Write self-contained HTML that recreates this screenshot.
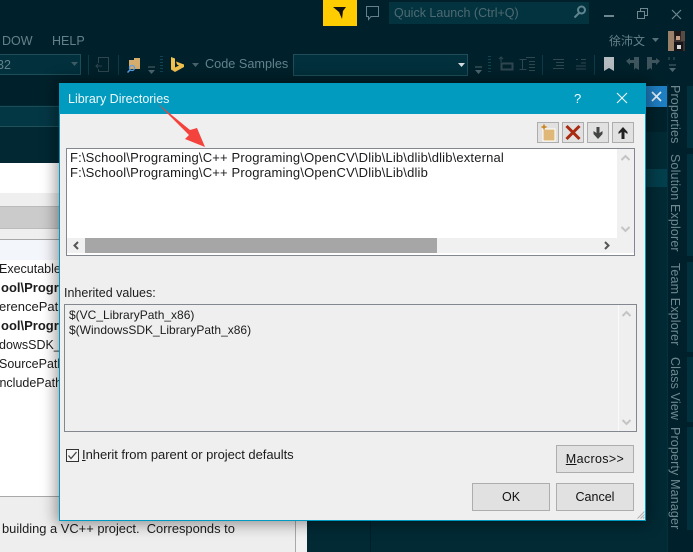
<!DOCTYPE html>
<html><head><meta charset="utf-8">
<style>
html,body{margin:0;padding:0;}
body{width:693px;height:552px;overflow:hidden;position:relative;background:#00212b;font-family:"Liberation Sans","Noto Sans CJK TC",sans-serif;font-size:12px;}
.a{position:absolute;}
.t{position:absolute;white-space:nowrap;line-height:16px;}
.d{color:#1c1c1c;}
.m{color:#64808a;}
.btn{position:absolute;background:#e1e1e1;border:1px solid #adadad;box-sizing:border-box;text-align:center;color:#111;font-size:12.5px;line-height:27px;}
.tb{position:absolute;width:22px;height:21px;top:122px;background:#e1e1e1;border:1px solid #adadad;box-sizing:border-box;}
.v{position:absolute;white-space:nowrap;color:#6f8890;font-size:12.5px;letter-spacing:.15px;line-height:16px;transform-origin:0 0;transform:rotate(90deg);}
</style></head><body>

<!-- top chrome -->
<div class="a" style="left:323px;top:0;width:34px;height:26px;background:#ffcc00"></div>
<svg class="a" style="left:323px;top:0" width="34" height="26"><path d="M10 7H23L20 11L19 19L16 12Z" fill="#111"/></svg>
<svg class="a" style="left:364px;top:5px" width="17" height="17" fill="none" stroke="#64808a" stroke-width="1"><path d="M2.500 1.500H14.500V11.500H7L4.500 14.500V11.500H2.500Z"/></svg>
<div class="a" style="left:389px;top:2px;width:200px;height:22px;background:#03333f"></div>
<div class="t" style="left:394px;top:5px;color:#4d6a73;font-size:12.500px">Quick Launch (Ctrl+Q)</div>
<svg class="a" style="left:571px;top:4px" width="18" height="16" fill="none" stroke="#5f8490" stroke-width="2"><circle cx="10.500" cy="6" r="3.500"/><path d="M8 9L3.500 13.500"/></svg>
<div class="a" style="left:604px;top:15px;width:10px;height:2px;background:#6f8890"></div>
<svg class="a" style="left:636px;top:7px" width="14" height="14" fill="none" stroke="#6f8890" stroke-width="1"><rect x="1.500" y="4.500" width="7" height="7"/><path d="M4.500 4V1.500H11.500V8.500H9"/></svg>
<svg class="a" style="left:671px;top:9px" width="12" height="11" stroke="#6f8890" stroke-width="1.200"><path d="M1 1L10 10M10 1L1 10"/></svg>

<div class="t m" style="left:2px;top:33px;font-size:12.500px">DOW</div>
<div class="t m" style="left:52px;top:33px;font-size:12.500px">HELP</div>
<div class="t m" style="left:609px;top:33px;font-size:12px">徐沛文</div>
<svg class="a" style="left:652px;top:38px" width="8" height="5"><path d="M0 0H7L3.500 4Z" fill="#58707a"/></svg>
<svg class="a" style="left:668px;top:31px" width="17" height="20"><rect width="17" height="20" fill="#3a3030"/><path d="M0 0H6V20H0Z" fill="#9a8068"/><path d="M6 0H13L12 8H7Z" fill="#1c1618"/><path d="M8 5H12V9H8Z" fill="#c79f86"/><path d="M6 11H15V20H6Z" fill="#15151a"/><path d="M9 14H13V18H9Z" fill="#d8d8d8"/><path d="M13 0H17V10H13Z" fill="#5a4a44"/></svg>

<!-- toolbar -->
<div class="a" style="left:-2px;top:54px;width:83px;height:21px;border:1px solid #1d4e5a;background:#02303c;box-sizing:border-box"></div>
<div class="t m" style="left:-3px;top:57px;font-size:12.500px">32</div>
<svg class="a" style="left:71px;top:62px" width="8" height="5"><path d="M0 0H7L3.500 4Z" fill="#3f5c66"/></svg>
<div class="a" style="left:88px;top:55px;width:1px;height:20px;background:#0d3c48"></div>
<svg class="a" style="left:95px;top:56px" width="15" height="18" fill="none" stroke="#2f464e"><path d="M3.500 7V1.500H13.500V15.500H3.500V13"/><path d="M1 10H7M3 8L1 10L3 12"/></svg>
<div class="a" style="left:118px;top:55px;width:1px;height:20px;background:#0d3c48"></div>
<svg class="a" style="left:126px;top:57px" width="16" height="16"><path d="M3 3H8V1H14V12H3Z" fill="#d6ad6d"/><circle cx="6" cy="11" r="2.500" fill="none" stroke="#5c9fe8" stroke-width="1.300"/><path d="M4 13L1.500 15.500" stroke="#5c9fe8" stroke-width="1.500"/></svg>
<svg class="a" style="left:147px;top:66px" width="9" height="9"><path d="M1 1H8" stroke="#4f666e"/><path d="M1 4H8L4.500 8Z" fill="#4f666e"/></svg>
<div class="a" style="left:160px;top:56px;width:3px;height:17px;background:repeating-linear-gradient(#0f4450 0 1px,transparent 1px 3px)"></div>
<svg class="a" style="left:170px;top:56px" width="15" height="17"><path d="M1 1L5 2.500V11.500L9 9.500L7 8.500L6 5.500L14 8.500V11L5 16L1 13.500Z" fill="#f2c14e"/></svg>
<svg class="a" style="left:192px;top:63px" width="8" height="5"><path d="M0 0H7L3.500 4Z" fill="#4a626b"/></svg>
<div class="t" style="left:205px;top:56px;color:#62828d;font-size:12.700px">Code Samples</div>
<div class="a" style="left:293px;top:54px;width:175px;height:22px;border:1px solid #1d4e5a;background:#02303c;box-sizing:border-box"></div>
<svg class="a" style="left:458px;top:63px" width="8" height="5"><path d="M0 0H7L3.500 4Z" fill="#d5dde0"/></svg>
<svg class="a" style="left:474px;top:66px" width="9" height="9"><path d="M1 1H8" stroke="#4f666e"/><path d="M1 4H8L4.500 8Z" fill="#4f666e"/></svg>
<div class="a" style="left:488px;top:56px;width:3px;height:17px;background:repeating-linear-gradient(#0f4450 0 1px,transparent 1px 3px)"></div>
<svg class="a" style="left:498px;top:56px" width="72" height="17" fill="none" stroke="#30474f"><path d="M3 1V6M1 3L3 1L5 3" /><rect x="3.500" y="7.500" width="11" height="6" stroke-width="2"/><path d="M21.500 3.500H28.500M24.500 3.500V13.500M21.500 13.500H28.500M28 1.500H37M31 5.500H37M31 8.500H37M31 11.500H37M31 14.500H37"/></svg>
<div class="a" style="left:542px;top:55px;width:1px;height:20px;background:#0d3c48"></div>
<svg class="a" style="left:551px;top:58px" width="36" height="13" fill="none" stroke="#30474f"><path d="M2 1.500H13M5 4.500H13M5 7.500H13M2 10.500H13M25 1.500H27M30 1.500H35M30 5H35M25 8H35M25 11H35"/></svg>
<div class="a" style="left:594px;top:55px;width:1px;height:20px;background:#0d3c48"></div>
<svg class="a" style="left:604px;top:57px" width="10" height="15"><path d="M0 0H10V14L5 11L0 14Z" fill="#b4bcbf"/></svg>
<svg class="a" style="left:625px;top:57px" width="15" height="14"><path d="M1 4L5 1V3H9V0H14V13L10.500 11L9 13V6H5V8Z" fill="#3e555e"/></svg>
<svg class="a" style="left:646px;top:57px" width="15" height="14"><path d="M14 4L10 1V3H6V0H1V13L4.500 11L6 13V6H10V8Z" fill="#3e555e"/></svg>
<svg class="a" style="left:668px;top:56px" width="9" height="18"><path d="M1 1V4M6 1V4" stroke="#3e555e"/><path d="M1 9H8" stroke="#4f666e"/><path d="M1 12H8L4.500 16Z" fill="#4f666e"/></svg>

<!-- left background panel -->
<div class="a" style="left:0;top:105px;width:59px;height:58px;background:#012833"></div>
<div class="a" style="left:0;top:106px;width:59px;height:21px;background:#043744;border-top:1px solid #1a4c58;border-bottom:1px solid #1f505c;box-sizing:border-box"></div>
<div class="a" style="left:0;top:163px;width:59px;height:333px;background:#fff"></div>
<div class="a" style="left:0;top:193px;width:59px;height:47px;background:#efefef"></div>
<div class="a" style="left:0;top:206px;width:59px;height:23px;background:#cbcbcb;border-top:1px solid #bbb;border-bottom:1px solid #bbb;box-sizing:border-box"></div>
<div class="a" style="left:0;top:239px;width:59px;height:21px;background:#f3f6fb;border-top:1px solid #a8a8a8;box-sizing:border-box"></div>
<div class="t d" style="left:-1px;top:261px;font-size:12.500px">Executable</div>
<div class="t d" style="left:1px;top:280px;font-weight:bold;font-size:13px">ool\Progr</div>
<div class="t d" style="left:-1px;top:299px;font-size:13px;">erencePath</div>
<div class="t d" style="left:1px;top:318px;font-weight:bold;font-size:13px">ool\Progr</div>
<div class="t d" style="left:-1px;top:337px;font-size:12.500px">dowsSDK_L</div>
<div class="t d" style="left:-1px;top:356px;font-size:12.500px">SourcePath</div>
<div class="t d" style="left:-4px;top:375px;font-size:12.500px">IncludePath</div>
<div class="a" style="left:0;top:496px;width:296px;height:56px;background:#eee;border-top:1px solid #a9a9a9;box-sizing:border-box"></div>
<div class="t d" style="left:2px;top:521px;font-size:12.900px">building a VC++ project.&nbsp; Corresponds to</div>
<div class="a" style="left:295px;top:496px;width:1px;height:56px;background:#a9a9a9"></div>
<div class="a" style="left:296px;top:496px;width:11px;height:56px;background:#f2f2f2"></div>

<!-- center/right backgrounds -->
<div class="a" style="left:307px;top:500px;width:360px;height:52px;background:#022a35"></div>
<div class="a" style="left:370px;top:520px;width:1px;height:32px;background:#011f28"></div>
<div class="a" style="left:646px;top:107px;width:21px;height:413px;background:#022a35"></div>
<div class="a" style="left:646px;top:107px;width:21px;height:25px;background:#00222c"></div>
<div class="a" style="left:646px;top:169px;width:21px;height:18px;background:#033f4c"></div>
<div class="a" style="left:646px;top:86px;width:21px;height:21px;background:#1f7fc4"></div>
<svg class="a" style="left:646px;top:86px" width="21" height="21" stroke="#e8f2fa" stroke-width="1.700"><path d="M6 6L15 15M15 6L6 15"/></svg>
<div class="a" style="left:667px;top:84px;width:1px;height:468px;background:#01323e"></div>
<div class="a" style="left:687px;top:86px;width:6px;height:62px;background:#01313d"></div>
<div class="a" style="left:687px;top:154px;width:6px;height:102px;background:#01313d"></div>
<div class="a" style="left:687px;top:262px;width:6px;height:90px;background:#01313d"></div>
<div class="a" style="left:687px;top:357px;width:6px;height:65px;background:#01313d"></div>
<div class="a" style="left:687px;top:427px;width:6px;height:103px;background:#01313d"></div>
<div class="v" style="left:683px;top:85px;">Properties</div>
<div class="v" style="left:683px;top:154px;">Solution Explorer</div>
<div class="v" style="left:683px;top:263px;">Team Explorer</div>
<div class="v" style="left:683px;top:357px;">Class View</div>
<div class="v" style="left:683px;top:427px;">Property Manager</div>

<!-- dialog -->
<div class="a" style="left:59px;top:83px;width:587px;height:438px;background:#efefef;border:1px solid #009ac0;box-sizing:border-box;box-shadow:0 0 14px 3px rgba(0,0,0,.4)"></div>
<div class="a" style="left:59px;top:83px;width:587px;height:31px;background:#009bbf"></div>
<div class="t" style="left:68px;top:91px;color:#eef8fb;font-size:12.500px">Library Directories</div>
<div class="t" style="left:574px;top:91px;color:#f0f8fb;font-size:13px">?</div>
<svg class="a" style="left:616px;top:92px" width="12" height="12" stroke="#f0f8fb" stroke-width="1.100"><path d="M1 1L11 11M11 1L1 11"/></svg>

<!-- toolbar buttons -->
<div class="tb" style="left:537px"></div>
<svg class="a" style="left:537px;top:122px" width="22" height="21"><path d="M6 7H18V19H6Z" fill="#dfb877" stroke="#fff"/><path d="M7 1.500L8 4L10.500 5L8 6L7 8.500L6 6L3.500 5L6 4Z" fill="#c9861f"/></svg>
<div class="tb" style="left:562px"></div>
<svg class="a" style="left:562px;top:122px" width="22" height="21" stroke="#a92a10" stroke-width="3"><path d="M4.500 4L17.500 17M17.500 4L4.500 17"/></svg>
<div class="tb" style="left:587px"></div>
<svg class="a" style="left:587px;top:122px" width="22" height="21"><path d="M9.500 5H12.500V11L15.500 9V12L11 17L6.500 12V9L9.500 11Z" fill="#444"/></svg>
<div class="tb" style="left:612px"></div>
<svg class="a" style="left:612px;top:122px" width="22" height="21"><path d="M9.500 17H12.500V10L15.500 12V10L11 5L6.500 10V12L9.500 10Z" fill="#222"/></svg>

<!-- directories list -->
<div class="a" style="left:66px;top:148px;width:569px;height:108px;background:#fff;border:1px solid #828790;box-sizing:border-box"></div>
<div class="t d" style="left:70px;top:150px;font-size:13px;letter-spacing:.16px">F:\School\Programing\C++ Programing\OpenCV\Dlib\Lib\dlib\dlib\external</div>
<div class="t d" style="left:70px;top:165px;font-size:13px;letter-spacing:.16px">F:\School\Programing\C++ Programing\OpenCV\Dlib\Lib\dlib</div>
<div class="a" style="left:617px;top:149px;width:17px;height:89px;background:#f0f0f0"></div>
<div class="a" style="left:67px;top:238px;width:567px;height:15px;background:#f0f0f0"></div>
<div class="a" style="left:85px;top:238px;width:352px;height:15px;background:#a6a6a6"></div>
<svg class="a" style="left:72px;top:241px" width="9" height="9" fill="none" stroke="#555" stroke-width="2"><path d="M6 1L2.500 4.500L6 8"/></svg>
<svg class="a" style="left:602px;top:241px" width="9" height="9" fill="none" stroke="#555" stroke-width="2"><path d="M3 1L6.500 4.500L3 8"/></svg>
<svg class="a" style="left:620px;top:154px" width="11" height="8" fill="none" stroke="#c4c4c4" stroke-width="2"><path d="M1.500 6L5.500 2L9.500 6"/></svg>
<svg class="a" style="left:620px;top:225px" width="11" height="8" fill="none" stroke="#c4c4c4" stroke-width="2"><path d="M1.500 2L5.500 6L9.500 2"/></svg>

<!-- inherited -->
<div class="t d" style="left:64px;top:285px;font-size:12.500px">Inherited values:</div>
<div class="a" style="left:64px;top:304px;width:573px;height:128px;background:#efefef;border:1px solid #828790;box-sizing:border-box"></div>
<div class="t d" style="left:69px;top:307px;">$(VC_LibraryPath_x86)</div>
<div class="t d" style="left:69px;top:322px;">$(WindowsSDK_LibraryPath_x86)</div>
<div class="a" style="left:618px;top:305px;width:1px;height:126px;background:#fafafa"></div>
<svg class="a" style="left:621px;top:310px" width="11" height="8" fill="none" stroke="#c4c4c4" stroke-width="2"><path d="M1.500 6L5.500 2L9.500 6"/></svg>
<svg class="a" style="left:621px;top:418px" width="11" height="8" fill="none" stroke="#c4c4c4" stroke-width="2"><path d="M1.500 2L5.500 6L9.500 2"/></svg>

<!-- checkbox -->
<div class="a" style="left:66px;top:449px;width:13px;height:13px;background:#f4f4f4;border:1px solid #333;box-sizing:border-box"></div>
<svg class="a" style="left:66px;top:449px" width="13" height="13" fill="none" stroke="#444" stroke-width="1.300"><path d="M2.500 6.500L5 9.500L10.500 3"/></svg>
<div class="t d" style="left:82px;top:447px;font-size:13px;letter-spacing:-.04px"><u>I</u>nherit from parent or project defaults</div>

<!-- buttons -->
<div class="btn" style="left:556px;top:445px;width:78px;height:28px;letter-spacing:.35px"><u>M</u>acros&gt;&gt;</div>
<div class="btn" style="left:472px;top:483px;width:78px;height:28px">OK</div>
<div class="btn" style="left:556px;top:483px;width:78px;height:28px">Cancel</div>
<svg class="a" style="left:637px;top:511px" width="8" height="8" stroke="#b0b0b0"><path d="M7.500 .5L.5 7.500M7.500 3.500L3.500 7.500M7.500 6L6 7.500"/></svg>

<!-- red arrow -->
<svg class="a" style="left:150px;top:98px" width="60" height="52"><path d="M7 5L40 32L47 30L55 49L35 41L39 37Z" fill="#f4423c"/></svg>

</body></html>
